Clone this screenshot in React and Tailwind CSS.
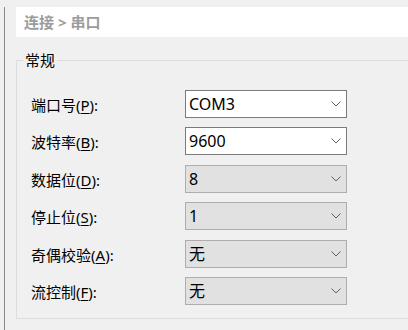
const font = { fontFamily: '"Noto Sans", "Noto Sans CJK SC", sans-serif' };

const rows = [
  { label: "端口号", key: "P", value: "COM3", active: true, mt: "mt-0" },
  { label: "波特率", key: "B", value: "9600", active: true, mt: "mt-[9px]" },
  { label: "数据位", key: "D", value: "8", active: false, mt: "mt-[10px]" },
  { label: "停止位", key: "S", value: "1", active: false, mt: "mt-[9px]" },
  { label: "奇偶校验", key: "A", value: "无", active: false, mt: "mt-[10px]" },
  { label: "流控制", key: "F", value: "无", active: false, mt: "mt-[9px]" },
];

const Chevron = () => (
  <svg width="10" height="6" viewBox="0 0 10 6" className="shrink-0">
    <path d="M0.5 0.5 L5 5 L9.5 0.5" fill="none" stroke="#5f5f5f" strokeWidth="1" />
  </svg>
);

const Row = ({ row }) => (
  <div className={`flex items-center h-[28px] ${row.mt}`}>
    <div className="w-[154px] text-[15px] text-black pt-[3px]">
      {row.label}(<u className="underline-offset-2">{row.key}</u>):
    </div>
    <div
      className={
        row.active
          ? "w-[162px] h-[28px] flex items-center justify-between pl-[3px] pr-[5px] bg-white border border-[#7a7a7a]"
          : "w-[162px] h-[28px] flex items-center justify-between pl-[3px] pr-[5px] bg-[#e1e1e1] border border-[#adadad]"
      }
    >
      <span className="text-[16px] text-black leading-none">{row.value}</span>
      <Chevron />
    </div>
  </div>
);

const App = () => {
  return (
    <div className="w-[408px] h-[330px] bg-[#f0f0f0] overflow-hidden pt-[7px] pl-[4px]" style={font}>
      <div className="h-full border-l border-[#8a8a8a] pl-[11px]">
        <div className="h-[30px] bg-white flex items-center pl-[8px]">
          <span className="text-[15px] font-bold text-[#9c9c9c]">连接 &gt; 串口</span>
        </div>
        <fieldset className="mt-[14px] w-[420px] border border-[#dcdcdc] pl-[14px] pt-[21px] pb-[13px]">
          <legend className="-ml-[8px] px-[2px] text-[15px] leading-[18px] text-black">常规</legend>
          {rows.map((row) => (
            <Row key={row.key} row={row} />
          ))}
        </fieldset>
      </div>
    </div>
  );
};

export default App;
